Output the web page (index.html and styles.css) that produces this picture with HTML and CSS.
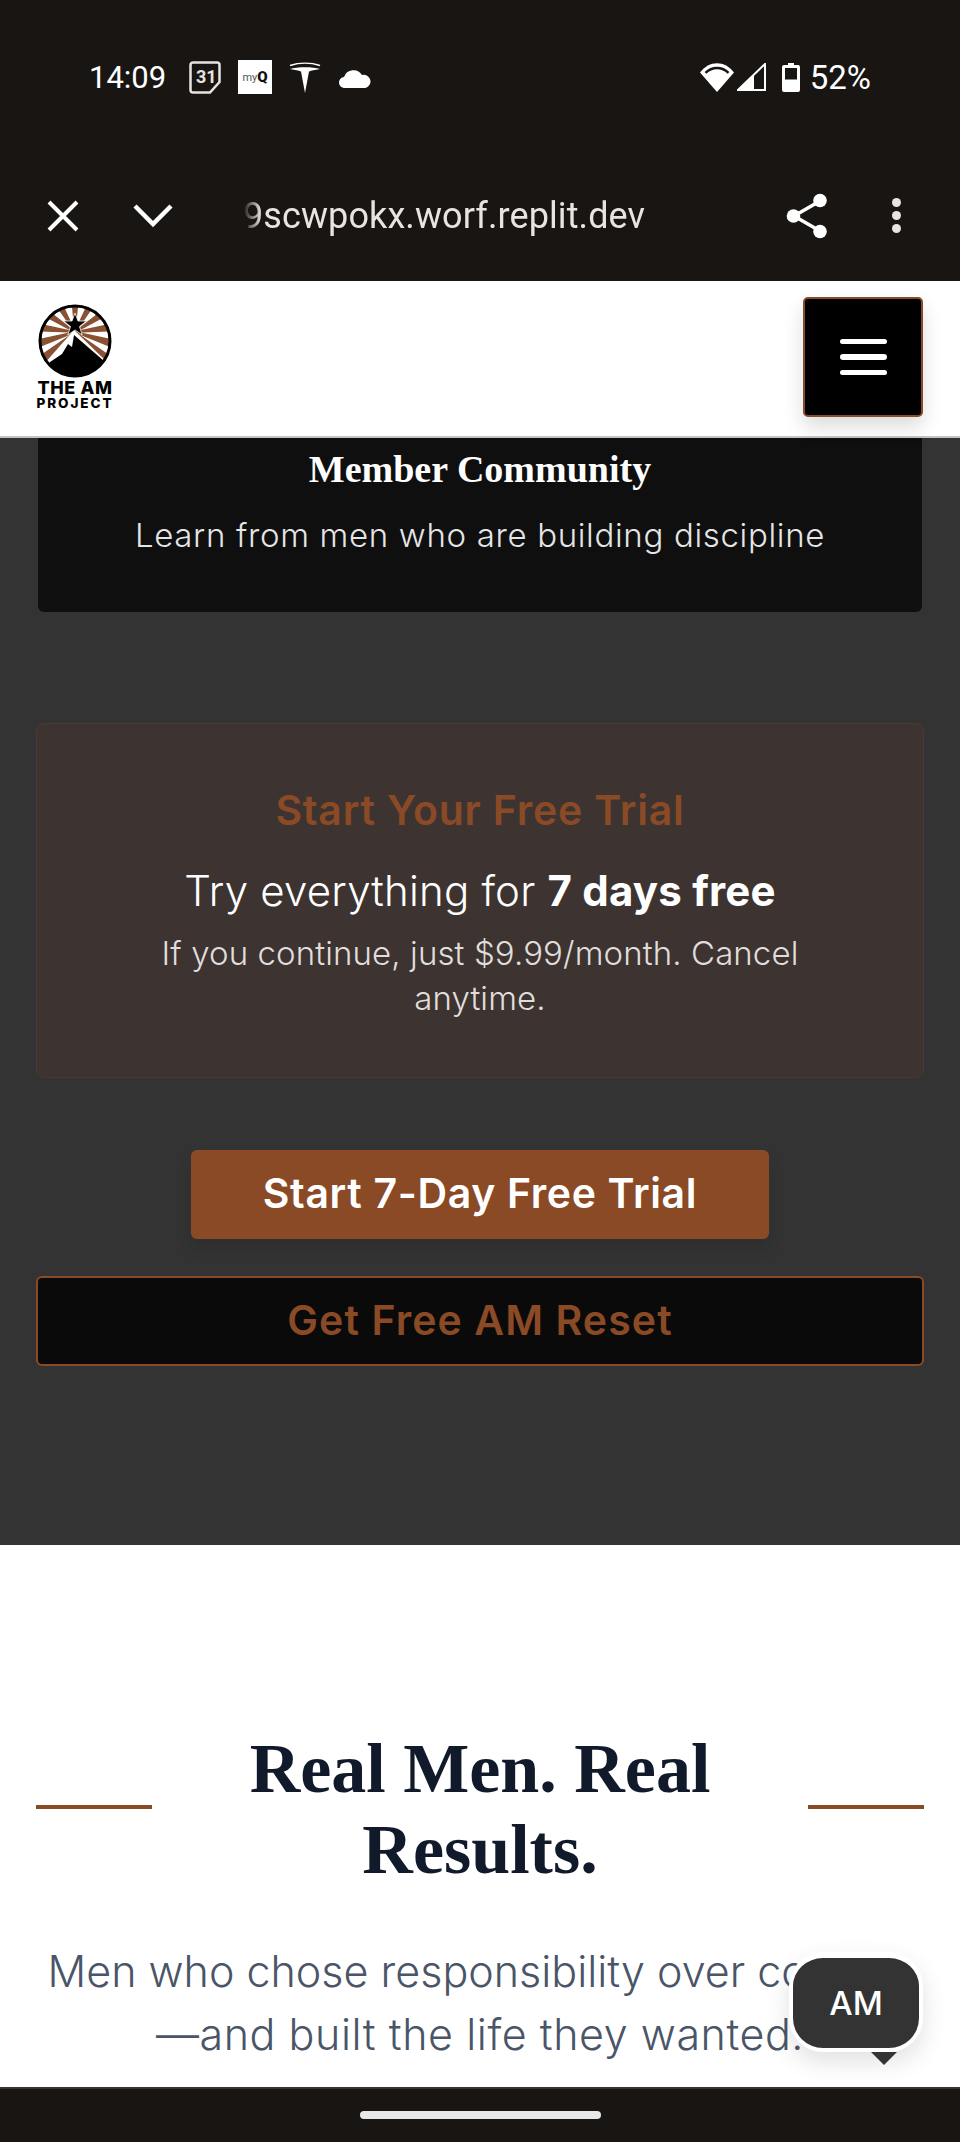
FILE: index.html
```html
<!DOCTYPE html>
<html lang="en">
<head>
    <meta charset="UTF-8">
    <meta name="viewport" content="width=device-width, initial-scale=1.0">
    <title>The AM Project</title>
    <link rel="stylesheet" href="styles.css">
</head>
<body>
<div class="status-bar">
    <div class="status-left">
        <span class="status-time">14:09</span>
        <span class="cal-icon">
            <svg width="32" height="33" viewBox="0 0 32 33"><path d="M4 1.500h24a2.500 2.500 0 0 1 2.500 2.500v17L21 31.500H4A2.500 2.500 0 0 1 1.500 29V4A2.500 2.500 0 0 1 4 1.500z" fill="none" stroke="#e6e4e2" stroke-width="2.500"/></svg>
            <span class="cal-num">31</span>
        </span>
        <span class="myq-icon"><span class="myq-my">my</span><span class="myq-q">Q</span></span>
        <svg class="tesla-icon" width="32" height="31" viewBox="0 0 32 31"><path d="M1 7C8 4.500 24 4.500 31 7C28 8 24 8 20 9.500L16 31 12 9.500C8 8 4 8 1 7z" fill="#fff"/><path d="M1 3.500C10 .5 22 .5 31 3.500" fill="none" stroke="#fff" stroke-width="1.600"/></svg>
        <svg class="cloud-icon" width="32" height="18" viewBox="0 0 32 18"><path d="M6 18a5.500 5.500 0 0 1-1-11A10 10 0 0 1 23 5a6.500 6.500 0 0 1 3.500 13z" fill="#fff"/></svg>
    </div>
    <div class="status-right">
        <svg width="34" height="29" viewBox="0 0 34 29"><path d="M0 9.500C9-3 25-3 34 9.500L17 29z" fill="#fff"/><path d="M5.500 9.800C12 3.300 22 3.300 28.500 9.800" fill="none" stroke="#181512" stroke-width="2.500"/></svg>
        <svg class="signal-icon" width="29" height="28" viewBox="0 0 29 28"><path d="M28 1v26H1z" fill="none" stroke="#fff" stroke-width="2"/><path d="M17 12L1 27h16z" fill="#fff"/></svg>
        <svg class="battery-icon" width="18" height="29" viewBox="0 0 18 29"><path d="M6 0h6v2h4a2 2 0 0 1 2 2v23a2 2 0 0 1-2 2H2a2 2 0 0 1-2-2V4a2 2 0 0 1 2-2h4z" fill="#fff"/><rect x="3" y="5" width="12" height="11.500" fill="#181512"/></svg>
        <span class="status-batt">52%</span>
    </div>
</div>

<div class="toolbar">
    <svg class="tool-x" width="32" height="32" viewBox="0 0 32 32"><path d="M2 2l28 28M30 2L2 30" stroke="#fff" stroke-width="4" fill="none"/></svg>
    <svg class="tool-chevron" width="40" height="26" viewBox="0 0 40 26"><path d="M2 3l18 18L38 3" stroke="#fff" stroke-width="4.500" fill="none"/></svg>
    <div class="tool-url">9scwpokx.worf.replit.dev</div>
    <svg class="tool-share" width="42" height="46" viewBox="0 0 42 46"><path d="M34 8L8 23l26 15" stroke="#fff" stroke-width="3.500" fill="none"/><circle cx="34" cy="7.500" r="6.800" fill="#fff"/><circle cx="7.500" cy="23" r="6.800" fill="#fff"/><circle cx="34" cy="38.500" r="6.800" fill="#fff"/></svg>
    <div class="tool-dots"><span></span><span></span><span></span></div>
</div>

<div class="viewport">
    <header class="site-header">
        <div class="logo">
            <svg width="74" height="74" viewBox="0 0 74 74">
                <defs><clipPath id="logo-clip"><circle cx="37" cy="37" r="34.500"/></clipPath></defs>
                <g clip-path="url(#logo-clip)">
                    <rect width="74" height="74" fill="#fff"/>
                    <g fill="#8a5233" stroke="#8a5233" stroke-width="1.500">
                        <path d="M37 28L33-17h8z"/>
                        <path d="M37 28L56-12.800l6.800 3.900z"/>
                        <path d="M37 28L72.500.3l4.200 6.600z"/>
                        <path d="M37 28L81 18.600l1 7.800z"/>
                        <path d="M37 28L81 37.400l-2.300 7.500z"/>
                        <path d="M37 28L73.900 53.800l-5.100 6z"/>
                        <path d="M37 28L-7 18.600l-1 7.800z"/>
                        <path d="M37 28L18-12.800l-6.800 3.900z"/>
                        <path d="M37 28L1.500.3-2.700 6.900z"/>
                        <path d="M37 28L-7 37.400l2.300 7.500z"/>
                        <path d="M37 28L.1 53.800l5.100 6z"/>
                    </g>
                    <path d="M36 26L68 57 74 74H0L6 60z" fill="#fff"/>
                    <path d="M36 31L66 57 72 74H2L12 58 24 50 30 40 34 43z" fill="#000"/>
                    <path d="M37 9l3 8h8.500l-7 5.500 2.700 8.500L37 26l-7.200 5 2.700-8.500-7-5.500H34z" fill="#000" stroke="#fff" stroke-width="0.800"/>
                </g>
                <circle cx="37" cy="37" r="35" fill="none" stroke="#000" stroke-width="3"/>
            </svg>
            <div class="logo-title">THE AM</div>
            <div class="logo-sub">PROJECT</div>
        </div>
        <button class="menu-btn"><span></span><span></span><span></span></button>
    </header>

    <main class="page">
        <section class="dark-section">
            <div class="feature-card">
                <h3>Member Community</h3>
                <p>Learn from men who are building discipline</p>
            </div>
            <div class="trial-card">
                <h4>Start Your Free Trial</h4>
                <p class="trial-line">Try everything for <strong>7 days free</strong></p>
                <p class="trial-note">If you continue, just $9.99/month. Cancel anytime.</p>
            </div>
            <a class="btn-primary">Start 7-Day Free Trial</a>
            <a class="btn-outline">Get Free AM Reset</a>
        </section>
        <section class="results">
            <div class="results-head">
                <span class="rule"></span>
                <h2>Real Men. Real Results.</h2>
                <span class="rule"></span>
            </div>
            <p class="results-sub"><span class="sub-first">Men who chose responsibility over comfort</span><br>—and built the life they wanted.</p>
        </section>
    </main>

    <div class="chat-bubble">AM</div>
</div>

<div class="nav-bar"><span class="nav-pill"></span></div>
</body>
</html>
```

FILE: styles.css
```css
html, body {
    margin: 0;
    height: 100%;
}

body {
    width: 960px;
    height: 2142px;
    overflow: hidden;
    display: flex;
    flex-direction: column;
    background-color: #181512;
    font-family: Inter, "Open Sans", sans-serif;
}

/* phone status bar */
.status-bar {
    height: 152px;
    flex: none;
    box-sizing: border-box;
    padding: 59px 89px 0 89px;
    display: flex;
    justify-content: space-between;
    align-items: flex-start;
    color: #fff;
    font-family: Roboto, sans-serif;
    font-size: 31px;
}

.status-left,
.status-right {
    display: flex;
    align-items: center;
    height: 36px;
}

.status-time {
    width: 100px;
}

.cal-icon {
    position: relative;
    width: 32px;
    height: 33px;
    display: flex;
    margin-right: 17px;
}

.cal-num {
    position: absolute;
    left: 7px;
    top: 6px;
    font-size: 18px;
    font-weight: 700;
    line-height: 20px;
    color: #e6e4e2;
}

.myq-icon {
    width: 34px;
    height: 34px;
    background-color: #fff;
    margin-right: 17px;
    display: flex;
    align-items: center;
    justify-content: center;
    color: #555;
    font-size: 11px;
}

.myq-q {
    color: #111;
    font-weight: 900;
    font-size: 15px;
}

.tesla-icon {
    margin-right: 18px;
}

.cloud-icon {
    margin-top: 4px;
}

.status-right {
    margin-left: auto;
}

.signal-icon {
    margin-left: 3px;
}

.battery-icon {
    margin-left: 16px;
}

.status-batt {
    margin-left: 10px;
    font-size: 33px;
}

/* browser toolbar */
.toolbar {
    height: 129px;
    flex: none;
    box-sizing: border-box;
    padding: 0 0 2px 47px;
    display: flex;
    align-items: center;
}

.tool-chevron {
    margin-left: 54px;
}

.tool-url {
    width: 402px;
    margin-left: 70px;
    color: #e8e4e1;
    font-family: Roboto, sans-serif;
    font-size: 36px;
    letter-spacing: 0.1px;
    white-space: nowrap;
    overflow: hidden;
    -webkit-mask-image: linear-gradient(to right, transparent 0, #000 18px);
    mask-image: linear-gradient(to right, transparent 0, #000 18px);
}

.tool-share {
    margin-left: 141px;
}

.tool-dots {
    margin-left: 64px;
    display: flex;
    flex-direction: column;
    gap: 4px;
}

.tool-dots span {
    width: 9px;
    height: 9px;
    border-radius: 50%;
    background-color: #e8e4e1;
}

/* web page area */
.viewport {
    position: relative;
    flex: 1;
    min-height: 0;
    display: flex;
    flex-direction: column;
    background-color: #fff;
}

.site-header {
    height: 157px;
    flex: none;
    box-sizing: border-box;
    padding: 16px 37px 0 37px;
    display: flex;
    justify-content: space-between;
    align-items: flex-start;
    background-color: #fff;
    border-bottom: 2px solid #c4c4c4;
    position: relative;
    z-index: 1;
}

.logo {
    width: 76px;
    display: flex;
    flex-direction: column;
    align-items: center;
    color: #000;
    font-family: Inter, sans-serif;
    font-weight: 800;
    line-height: 1;
}

.logo svg {
    display: block;
    margin-top: 7px;
}

.logo-title {
    font-size: 18px;
    letter-spacing: 0.6px;
    margin-top: 1px;
    white-space: nowrap;
}

.logo-sub {
    font-size: 13.500px;
    letter-spacing: 1.900px;
    margin-top: 0;
    white-space: nowrap;
}

.menu-btn {
    width: 120px;
    height: 120px;
    padding: 0;
    box-sizing: border-box;
    background-color: #000;
    border: 2px solid #8b4a26;
    border-radius: 5px;
    box-shadow: 0 10px 20px rgba(0, 0, 0, 0.14);
    display: flex;
    flex-direction: column;
    align-items: center;
    justify-content: center;
    gap: 10px;
}

.menu-btn span {
    width: 47px;
    height: 5.500px;
    border-radius: 3px;
    background-color: #fff;
}

.page {
    flex: 1;
    min-height: 0;
    overflow: hidden;
}

.dark-section {
    height: 1107px;
    box-sizing: border-box;
    padding: 0 36px;
    background-color: #333;
    display: flex;
    flex-direction: column;
    align-items: center;
}

.feature-card {
    width: 884px;
    height: 174px;
    box-sizing: border-box;
    padding-top: 7px;
    background-color: #0f0f0f;
    border-radius: 0 0 6px 6px;
    text-align: center;
    color: #fff;
    flex: none;
}

.feature-card h3 {
    margin: 0;
    font-family: "Liberation Serif", serif;
    font-size: 38px;
    font-weight: 700;
    line-height: 48px;
}

.feature-card p {
    margin: 19px 0 0;
    font-size: 33px;
    font-weight: 300;
    line-height: 46px;
    letter-spacing: 0.66px;
    color: #e5e5e5;
}

.trial-card {
    width: 888px;
    height: 355px;
    margin-top: 111px;
    box-sizing: border-box;
    padding: 61px 70px 0;
    background-color: #3d3431;
    border: 1px solid #4c3a30;
    border-radius: 8px;
    text-align: center;
    flex: none;
}

.trial-card h4 {
    margin: 0;
    color: #8b4a26;
    font-size: 41px;
    font-weight: 600;
    line-height: 50px;
    letter-spacing: 0.8px;
}

.trial-line {
    margin: 29px 0 0;
    color: #fff;
    font-size: 42px;
    font-weight: 300;
    line-height: 54px;
    letter-spacing: 0.2px;
}

.trial-line strong {
    font-weight: 700;
}

.trial-note {
    margin: 13px 0 0;
    color: #e0dedd;
    font-size: 33px;
    font-weight: 300;
    line-height: 45px;
    letter-spacing: 0.1px;
}

.btn-primary {
    width: 578px;
    height: 89px;
    margin-top: 72px;
    box-sizing: border-box;
    padding-bottom: 3px;
    display: flex;
    align-items: center;
    justify-content: center;
    background-color: #8b4a26;
    border-radius: 6px;
    box-shadow: 0 10px 15px rgba(0, 0, 0, 0.1);
    color: #fff;
    font-size: 41px;
    font-weight: 600;
    letter-spacing: 0.65px;
    flex: none;
}

.btn-outline {
    width: 888px;
    height: 90px;
    margin-top: 37px;
    box-sizing: border-box;
    padding-bottom: 3px;
    display: flex;
    align-items: center;
    justify-content: center;
    background-color: #0a0a0a;
    border: 2px solid #8b4a26;
    border-radius: 6px;
    color: #8b4a26;
    font-size: 41px;
    font-weight: 600;
    letter-spacing: 1.1px;
    flex: none;
}

.results {
    padding: 0 36px;
    background-color: #fff;
}

.results-head {
    padding-top: 179px;
    display: flex;
    align-items: center;
    justify-content: space-between;
}

.rule {
    width: 116px;
    height: 4px;
    background-color: #8b4a26;
    flex: none;
}

.results-head h2 {
    margin: 0;
    flex: 1;
    padding: 4px 70px 0;
    text-align: center;
    color: #111a2b;
    font-family: "Liberation Serif", serif;
    font-size: 70px;
    font-weight: 700;
    line-height: 81px;
}

.results-sub {
    margin: 50px 0 0;
    text-align: center;
    color: #4a5568;
    font-size: 43px;
    font-weight: 300;
    line-height: 63px;
    letter-spacing: 0.55px;
    white-space: nowrap;
}

.sub-first {
    letter-spacing: 0;
}

/* floating chat button */
.chat-bubble {
    position: absolute;
    right: 37px;
    bottom: 35px;
    width: 126px;
    height: 90px;
    border: 4px solid #fff;
    border-top-width: 6px;
    border-radius: 34px;
    background-color: #333;
    box-shadow: 0 10px 25px rgba(0, 0, 0, 0.12);
    display: flex;
    align-items: center;
    justify-content: center;
    color: #fff;
    font-size: 33px;
    font-weight: 500;
    z-index: 2;
}

.chat-bubble::after {
    content: "";
    position: absolute;
    right: 22px;
    bottom: -17px;
    border-left: 13px solid transparent;
    border-right: 13px solid transparent;
    border-top: 13px solid #333;
}

/* phone nav bar */
.nav-bar {
    height: 55px;
    flex: none;
    box-sizing: border-box;
    border-top: 2px solid #333;
    padding-top: 22px;
    display: flex;
    justify-content: center;
    align-items: flex-start;
}

.nav-pill {
    width: 241px;
    height: 8px;
    border-radius: 4px;
    background-color: #e8e8e8;
}
```
